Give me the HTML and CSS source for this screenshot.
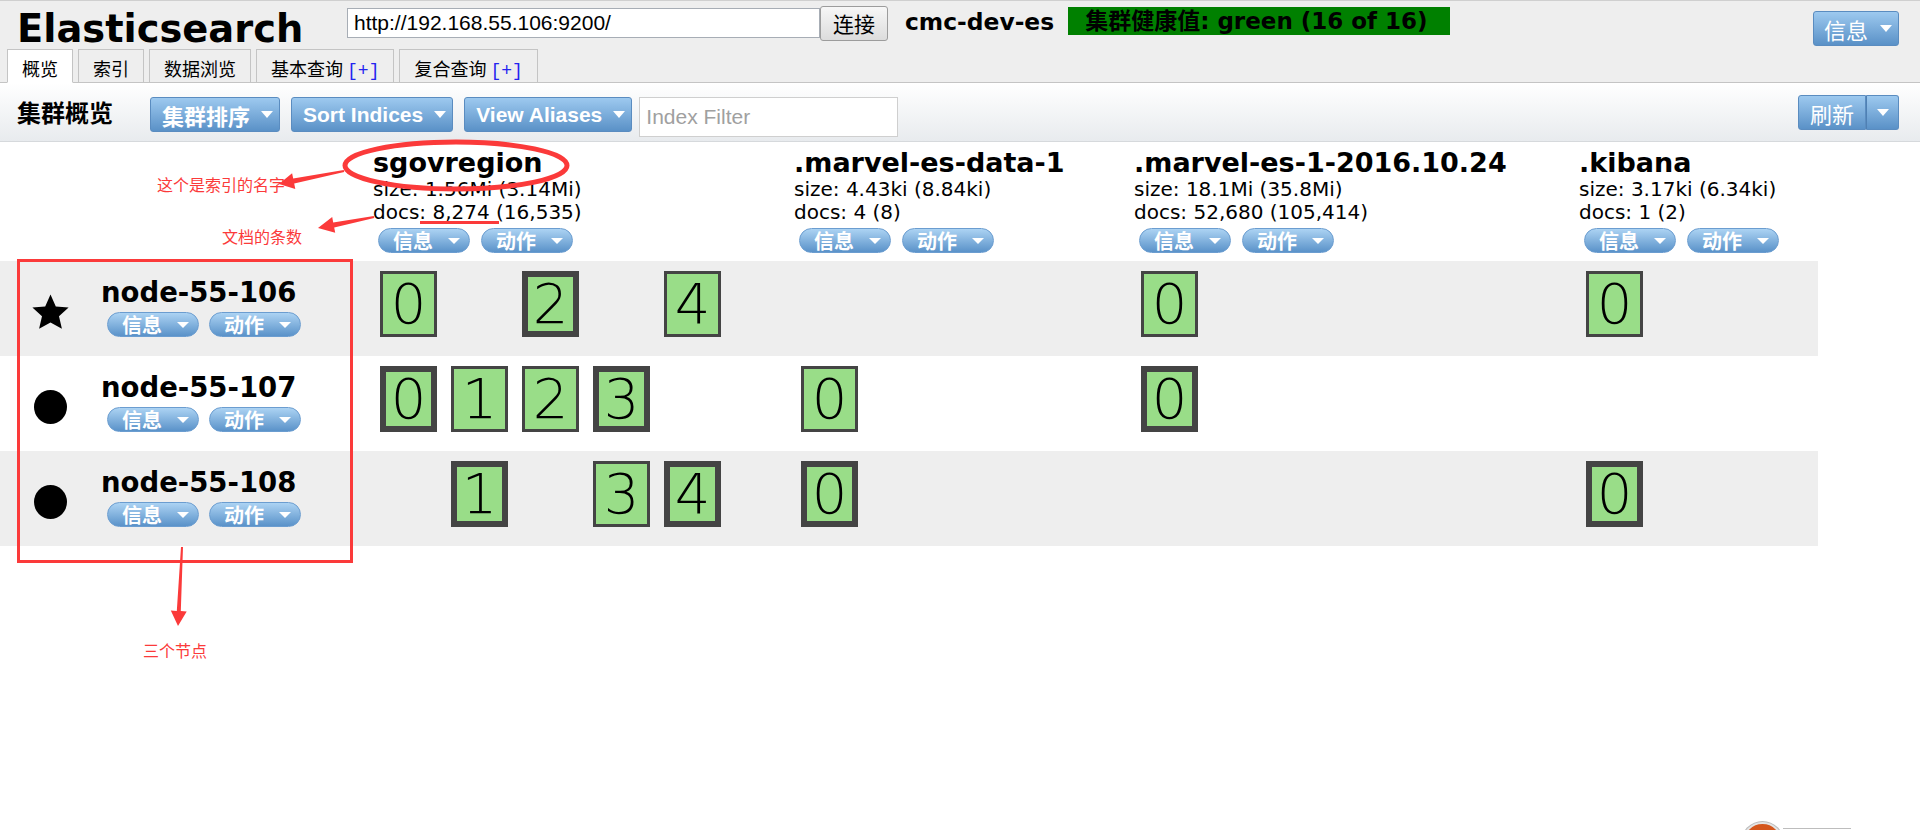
FILE: index.html
```html
<!DOCTYPE html>
<html lang="zh-CN">
<head>
<meta charset="utf-8">
<title>Elasticsearch</title>
<link rel="stylesheet" href="styles.css">
</head>
<body>
<div class="page">
  <header class="header">
    <div class="top-row">
      <h1 class="brand">Elasticsearch</h1>
      <input class="url" type="text" value="http://192.168.55.106:9200/">
      <button class="connect">连接</button>
      <span class="cluster-name">cmc-dev-es</span>
      <span class="health">集群健康值: green (16 of 16)</span>
      <button class="btn-blue info-btn"><span>信息</span><span class="caret"></span></button>
    </div>
    <nav class="tabs">
      <span class="tab active">概览</span>
      <span class="tab">索引</span>
      <span class="tab">数据浏览</span>
      <span class="tab">基本查询 <span class="plus">[+]</span></span>
      <span class="tab">复合查询 <span class="plus">[+]</span></span>
    </nav>
  </header>

  <div class="toolbar">
    <h2 class="tb-title">集群概览</h2>
    <button class="btn-blue tb-btn cjk">集群排序<span class="caret"></span></button>
    <button class="btn-blue tb-btn latin">Sort Indices<span class="caret"></span></button>
    <button class="btn-blue tb-btn latin">View Aliases<span class="caret"></span></button>
    <input class="filter" type="text" placeholder="Index Filter">
    <div class="split">
      <button class="btn-blue split-main">刷新</button>
      <button class="btn-blue split-caret"><span class="caret"></span></button>
    </div>
  </div>

  <main class="overview">
    <div class="row head">
      <div></div>
      <div class="idx">
        <div class="idx-name">sgovregion</div>
        <div class="idx-stat">size: 1.56Mi (3.14Mi)</div>
        <div class="idx-stat">docs: 8,274 (16,535)</div>
        <div class="pills"><span class="pill">信息<span class="caret small"></span></span><span class="pill">动作<span class="caret small"></span></span></div>
      </div>
      <div class="idx">
        <div class="idx-name">.marvel-es-data-1</div>
        <div class="idx-stat">size: 4.43ki (8.84ki)</div>
        <div class="idx-stat">docs: 4 (8)</div>
        <div class="pills"><span class="pill">信息<span class="caret small"></span></span><span class="pill">动作<span class="caret small"></span></span></div>
      </div>
      <div class="idx">
        <div class="idx-name">.marvel-es-1-2016.10.24</div>
        <div class="idx-stat">size: 18.1Mi (35.8Mi)</div>
        <div class="idx-stat">docs: 52,680 (105,414)</div>
        <div class="pills"><span class="pill">信息<span class="caret small"></span></span><span class="pill">动作<span class="caret small"></span></span></div>
      </div>
      <div class="idx">
        <div class="idx-name">.kibana</div>
        <div class="idx-stat">size: 3.17ki (6.34ki)</div>
        <div class="idx-stat">docs: 1 (2)</div>
        <div class="pills"><span class="pill">信息<span class="caret small"></span></span><span class="pill">动作<span class="caret small"></span></span></div>
      </div>
    </div>

    <div class="row node alt">
      <div class="node-cell">
        <span class="node-icon"><svg width="37" height="35" viewBox="0 0 37 35"><polygon points="18.5,0.5 23.8,12.6 36.6,13.6 27,22.3 29.9,34.8 18.5,28.4 7.1,34.8 10,22.3 0.4,13.6 13.2,12.6" fill="#000"/></svg></span>
        <div class="node-info">
          <div class="node-name">node-55-106</div>
          <div class="pills"><span class="pill">信息<span class="caret small"></span></span><span class="pill">动作<span class="caret small"></span></span></div>
        </div>
      </div>
      <div class="shards"><span class="shard">0</span><span class="slot"></span><span class="shard primary">2</span><span class="slot"></span><span class="shard">4</span></div>
      <div class="shards"></div>
      <div class="shards"><span class="shard">0</span></div>
      <div class="shards"><span class="shard">0</span></div>
    </div>

    <div class="row node">
      <div class="node-cell">
        <span class="node-icon"><svg width="33" height="34" viewBox="0 0 33 34"><ellipse cx="16.5" cy="17" rx="16.5" ry="17" fill="#000"/></svg></span>
        <div class="node-info">
          <div class="node-name">node-55-107</div>
          <div class="pills"><span class="pill">信息<span class="caret small"></span></span><span class="pill">动作<span class="caret small"></span></span></div>
        </div>
      </div>
      <div class="shards"><span class="shard primary">0</span><span class="shard">1</span><span class="shard">2</span><span class="shard primary">3</span></div>
      <div class="shards"><span class="shard">0</span></div>
      <div class="shards"><span class="shard primary">0</span></div>
      <div class="shards"></div>
    </div>

    <div class="row node alt">
      <div class="node-cell">
        <span class="node-icon"><svg width="33" height="34" viewBox="0 0 33 34"><ellipse cx="16.5" cy="17" rx="16.5" ry="17" fill="#000"/></svg></span>
        <div class="node-info">
          <div class="node-name">node-55-108</div>
          <div class="pills"><span class="pill">信息<span class="caret small"></span></span><span class="pill">动作<span class="caret small"></span></span></div>
        </div>
      </div>
      <div class="shards"><span class="slot"></span><span class="shard primary">1</span><span class="slot"></span><span class="shard">3</span><span class="shard primary">4</span></div>
      <div class="shards"><span class="shard primary">0</span></div>
      <div class="shards"></div>
      <div class="shards"><span class="shard primary">0</span></div>
    </div>
  </main>

  <svg class="annot" width="1920" height="830" viewBox="0 0 1920 830">
    <ellipse cx="456" cy="165.5" rx="111" ry="23.5" fill="none" stroke="#fb3a3a" stroke-width="5"/>
    <polygon points="279,184 292.1,173.3 293.2,178.6 343.8,170 344.2,172 294.2,183.5 295.3,188.9" fill="#fb3a3a"/>
    <polygon points="318,228 332.2,217 333.2,222.4 373.8,216 374.2,218 334.2,227.4 335.2,232.8" fill="#fb3a3a"/>
    <rect x="420" y="221" width="79" height="3" fill="#fb3a3a"/>
    <rect x="18.5" y="260.5" width="333" height="301" fill="none" stroke="#fb3a3a" stroke-width="3"/>
    <polygon points="178,626 170.8,610.6 176.8,610.9 181,547 183,547 180.8,611.1 186.7,611.4" fill="#fb3a3a"/>
  </svg>
  <span class="note note-name">这个是索引的名字</span>
  <span class="note note-docs">文档的条数</span>
  <span class="note note-nodes">三个节点</span>

  <div class="widget"><span class="widget-dot"></span><span class="widget-bar"></span></div>
</div>
</body>
</html>
```

FILE: styles.css
```css
* { box-sizing: border-box; }

html, body {
  margin: 0;
  padding: 0;
  overflow: hidden;
}

body {
  width: 1920px;
  height: 830px;
  background: #fff;
  color: #000;
  font-family: "DejaVu Sans", "Noto Sans CJK SC", sans-serif;
}

button, input {
  margin: 0;
  padding: 0;
  font: inherit;
  color: inherit;
}

.page {
  position: relative;
  width: 1920px;
  height: 830px;
  overflow: hidden;
}

/* ---------- header ---------- */
.header {
  background: #eee;
  border-top: 1px solid #cfcfcf;
  border-bottom: 1px solid #c4c4c4;
}

.top-row {
  display: flex;
  align-items: flex-start;
  height: 48px;
}

.brand {
  flex: none;
  width: 330px;
  margin: 9px 0 0 17px;
  font: bold 38.4px/38px "DejaVu Sans", sans-serif;
}

.url {
  flex: none;
  width: 473px;
  height: 30px;
  margin-top: 7px;
  padding: 0 6px;
  border: 1px solid #a7adb5;
  background: #fff;
  font: 21px "Liberation Sans", "Noto Sans CJK SC", sans-serif;
}

.connect {
  flex: none;
  width: 68px;
  height: 35px;
  margin-top: 5px;
  border: 1px solid #9c9c9c;
  border-radius: 3px;
  background: linear-gradient(#f7f7f7, #dcdcdc);
  font: 21px/31px "Noto Sans CJK SC", sans-serif;
}

.cluster-name {
  flex: none;
  margin: 7px 0 0 17px;
  font: bold 23.4px/28px "DejaVu Sans", sans-serif;
}

.health {
  flex: none;
  width: 382px;
  height: 28px;
  margin: 6px 0 0 14px;
  padding-left: 17px;
  background: #008000;
  font: bold 23px/28px "DejaVu Sans", "Noto Sans CJK SC", sans-serif;
  white-space: nowrap;
}

.btn-blue {
  border: 1px solid #5a8cc0;
  border-radius: 3px;
  background: linear-gradient(#9dc9ef, #5a91c7);
  color: #fff;
  font-family: "Noto Sans CJK SC", sans-serif;
  display: inline-flex;
  align-items: center;
}

.caret {
  display: inline-block;
  width: 0;
  height: 0;
  border-left: 6px solid transparent;
  border-right: 6px solid transparent;
  border-top: 7px solid #fff;
}

.caret.small {
  border-top-width: 6px;
  margin-left: auto;
}

.info-btn {
  flex: none;
  width: 86px;
  height: 35px;
  margin: 10px 21px 0 auto;
  padding: 0 6px 0 10px;
  justify-content: space-between;
  font-size: 22px;
}

.tabs {
  display: flex;
  gap: 5px;
  padding-left: 7px;
  height: 34px;
  margin-bottom: -1px;
}

.tab {
  height: 34px;
  padding: 5px 14px 0;
  border: 1px solid #c4c4c4;
  background: #eee;
  font: 18px/27px "Noto Sans CJK SC", sans-serif;
  white-space: nowrap;
}

.tab.active {
  background: #fff;
  border-bottom-color: #fff;
}

.plus {
  font-family: "Liberation Mono", monospace;
  color: #2323f0;
}

/* ---------- toolbar ---------- */
.toolbar {
  display: flex;
  align-items: flex-start;
  height: 59px;
  padding-left: 17px;
  border-bottom: 1px solid #d6d9dc;
  background: linear-gradient(#fff, #e8ebee);
}

.tb-title {
  flex: none;
  margin: 14px 0 0;
  font: bold 24px/30px "Noto Sans CJK SC", sans-serif;
}

.tb-btn {
  flex: none;
  height: 35px;
  margin-top: 14px;
  padding: 0 6px 0 11px;
  font-weight: bold;
}

.tb-btn .caret { margin-left: 11px; }

.tb-btn.cjk {
  margin-left: 37px;
  font-size: 22px;
}

.tb-btn.latin {
  margin-left: 11px;
  font-family: "Liberation Sans", sans-serif;
  font-size: 21px;
}

.filter {
  flex: none;
  width: 259px;
  height: 40px;
  margin: 14px 0 0 7px;
  padding: 0 6px;
  border: 1px solid #cfcfcf;
  background: #fff;
  font: 21px "Liberation Sans", sans-serif;
}

.filter::placeholder { color: #a0a0a0; }

.split {
  display: flex;
  margin: 12px 21px 0 auto;
}

.split-main {
  width: 68px;
  height: 35px;
  justify-content: center;
  border-radius: 3px 0 0 3px;
  font-size: 22px;
}

.split-caret {
  width: 33px;
  height: 35px;
  justify-content: center;
  border-left: 1px solid #4f80b3;
  border-radius: 0 3px 3px 0;
}

/* ---------- cluster overview ---------- */
.overview { width: 1818px; }

.row {
  display: grid;
  grid-template-columns: 373px 421px 340px 445px 239px;
}

.row.head { padding: 6px 0 8px; }

.row.node { height: 95px; }

.row.alt { background: #eee; }

.idx-name {
  font: bold 27px/30px "DejaVu Sans", sans-serif;
  white-space: nowrap;
}

.idx-stat {
  font: 20px/23px "DejaVu Sans", sans-serif;
  white-space: nowrap;
}

.pills {
  display: flex;
  gap: 11px;
  margin: 4px 0 0 5px;
}

.pill {
  flex: none;
  display: inline-flex;
  align-items: center;
  width: 92px;
  height: 25px;
  padding: 0 9px 0 14px;
  border: 1px solid #6b9dd0;
  border-radius: 13px;
  background: linear-gradient(#acd3f3, #5a92c9);
  color: #fff;
  font: bold 20px/25px "Noto Sans CJK SC", sans-serif;
}

.node-cell {
  display: flex;
  align-items: flex-start;
  padding-left: 32px;
}

.node-icon {
  flex: none;
  display: flex;
  justify-content: center;
  align-items: flex-end;
  width: 37px;
  height: 36px;
  margin-top: 32px;
}

.node-info {
  margin: 17px 0 0 32px;
}

.node-name {
  font: bold 27.5px/29px "DejaVu Sans", sans-serif;
  white-space: nowrap;
}

.node-info .pills {
  gap: 10px;
  margin: 5px 0 0 6px;
}

.shards {
  display: flex;
  align-items: flex-start;
  padding-top: 10px;
}

.shard,
.slot {
  flex: none;
  width: 57px;
  height: 66px;
  margin: 0 7px;
}

.shard {
  display: flex;
  align-items: center;
  justify-content: center;
  border: 3px solid #444;
  background: #99dd88;
  font: 300 56px/1 "DejaVu Sans", sans-serif;
}

.shard.primary { border-width: 6px; }

/* ---------- annotations ---------- */
.annot {
  position: absolute;
  left: 0;
  top: 0;
  pointer-events: none;
}

.note {
  position: absolute;
  color: #fb3a3a;
  font: 16px/16px "Noto Sans CJK SC", sans-serif;
  white-space: nowrap;
}

.note-name { left: 157px; top: 176px; }
.note-docs { left: 222px; top: 228px; }
.note-nodes { left: 143px; top: 642px; }

.widget {
  position: absolute;
  left: 1742px;
  top: 822px;
  display: flex;
  align-items: flex-start;
}

.widget-dot {
  width: 41px;
  height: 41px;
  border-radius: 50%;
  border: 2px solid #e4e4e4;
  background: #d4561c;
  box-shadow: 0 0 0 1px #bbb;
}

.widget-bar {
  width: 68px;
  margin-top: 6px;
  border-top: 1px solid #bdbdbd;
}
```
